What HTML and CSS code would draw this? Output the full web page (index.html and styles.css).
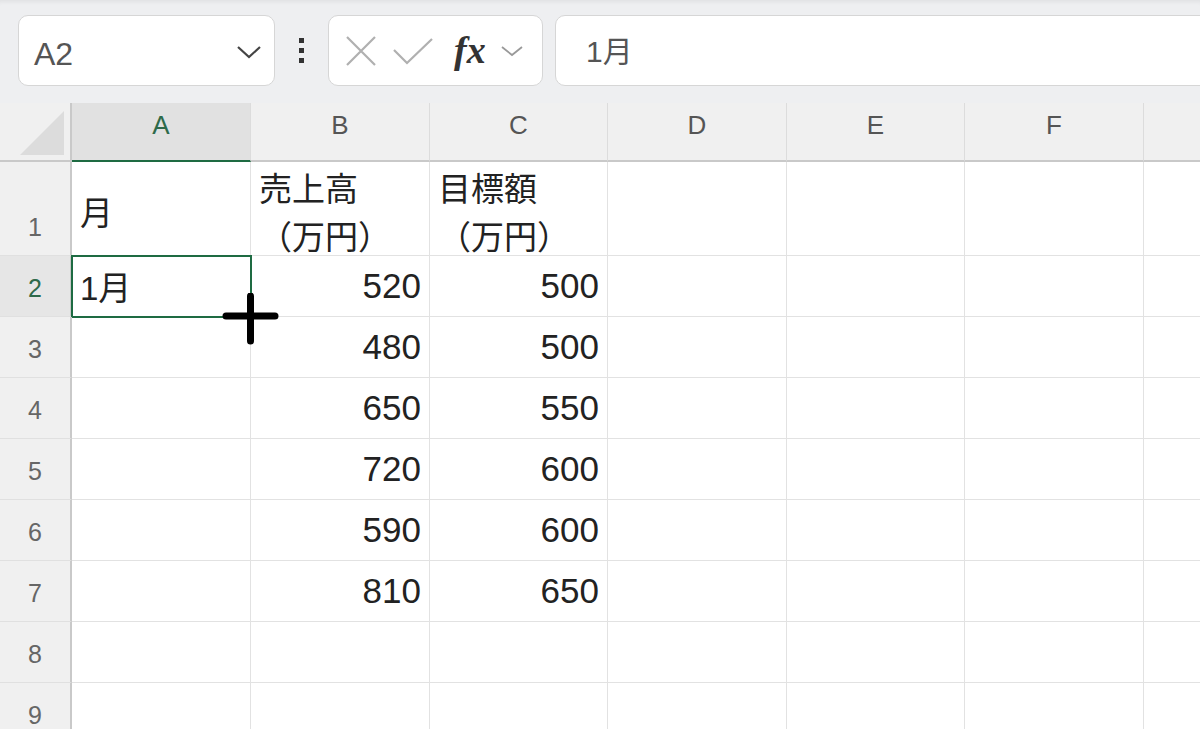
FILE: index.html
```html
<!DOCTYPE html>
<html lang="ja">
<head>
  <meta charset="UTF-8" />
  <title>Book1 - Excel</title>
  <link rel="stylesheet" href="styles.css">
</head>
<body>
  <div class="toolbar">
    <div class="namebox">
      <span>A2</span>
      <svg class="chev" width="26" height="14" viewBox="0 0 26 14"><path d="M2 2 L13 12 L24 2" fill="none" stroke="#444" stroke-width="2.2"/></svg>
    </div>
    <div class="dots"><i></i><i></i><i></i></div>
    <div class="fxbox">
      <svg width="34" height="32" viewBox="0 0 34 32"><path d="M3 2 L31 30 M31 2 L3 30" stroke="#b0b0b0" stroke-width="2.2" fill="none"/></svg>
      <svg width="42" height="28" viewBox="0 0 42 28"><path d="M2 13 L15 26 L40 2" stroke="#b0b0b0" stroke-width="2.2" fill="none"/></svg>
      <span class="fx">fx</span>
      <svg width="24" height="12" viewBox="0 0 24 12"><path d="M2 2 L12 10 L22 2" fill="none" stroke="#999" stroke-width="1.8"/></svg>
    </div>
    <div class="formula">1月</div>
  </div>

  <div class="sheet">
    <div class="grid">
      <!-- header row -->
      <div class="corner"><span class="tri"></span></div>
      <div class="colhdr sel">A</div>
      <div class="colhdr">B</div>
      <div class="colhdr">C</div>
      <div class="colhdr">D</div>
      <div class="colhdr">E</div>
      <div class="colhdr">F</div>
      <div class="colhdr"></div>

      <div class="rowhdr">1</div>
      <div class="cell jp">月</div>
      <div class="cell jp">売上高<br>（万円）</div>
      <div class="cell jp">目標額<br>（万円）</div>
      <div class="cell"></div><div class="cell"></div><div class="cell"></div><div class="cell"></div>

      <div class="rowhdr sel">2</div>
      <div class="cell active">1月</div>
      <div class="cell num">520</div>
      <div class="cell num">500</div>
      <div class="cell"></div><div class="cell"></div><div class="cell"></div><div class="cell"></div>

      <div class="rowhdr">3</div>
      <div class="cell"></div>
      <div class="cell num">480</div>
      <div class="cell num">500</div>
      <div class="cell"></div><div class="cell"></div><div class="cell"></div><div class="cell"></div>

      <div class="rowhdr">4</div>
      <div class="cell"></div>
      <div class="cell num">650</div>
      <div class="cell num">550</div>
      <div class="cell"></div><div class="cell"></div><div class="cell"></div><div class="cell"></div>

      <div class="rowhdr">5</div>
      <div class="cell"></div>
      <div class="cell num">720</div>
      <div class="cell num">600</div>
      <div class="cell"></div><div class="cell"></div><div class="cell"></div><div class="cell"></div>

      <div class="rowhdr">6</div>
      <div class="cell"></div>
      <div class="cell num">590</div>
      <div class="cell num">600</div>
      <div class="cell"></div><div class="cell"></div><div class="cell"></div><div class="cell"></div>

      <div class="rowhdr">7</div>
      <div class="cell"></div>
      <div class="cell num">810</div>
      <div class="cell num">650</div>
      <div class="cell"></div><div class="cell"></div><div class="cell"></div><div class="cell"></div>

      <div class="rowhdr">8</div>
      <div class="cell"></div><div class="cell"></div><div class="cell"></div>
      <div class="cell"></div><div class="cell"></div><div class="cell"></div><div class="cell"></div>

      <div class="rowhdr">9</div>
      <div class="cell"></div><div class="cell"></div><div class="cell"></div>
      <div class="cell"></div><div class="cell"></div><div class="cell"></div><div class="cell"></div>
    </div>

    <!-- fill cursor -->
    <svg class="cursor" width="58" height="52" viewBox="0 0 58 52">
      <path d="M4 23 L53 23 M28.5 3 L28.5 48" stroke="#000" stroke-width="7" stroke-linecap="round" fill="none"/>
    </svg>
  </div>
</body>
</html>
```

FILE: styles.css
```css
body {
  margin: 0;
  width: 1200px;
  height: 729px;
  overflow: hidden;
  background: #eeeff1;
  font-family: 'Liberation Sans', 'Noto Sans CJK JP', sans-serif;
  color: #222;
}

/* formula bar row */
.toolbar {
  display: flex;
  align-items: flex-start;
  height: 103px;
  box-sizing: border-box;
  padding: 15px 0 0 18px;
  box-shadow: inset 0 5px 4px -3px rgba(0,0,0,0.06);
}
.namebox,
.fxbox,
.formula {
  height: 71px;
  box-sizing: border-box;
  background: #fff;
  border: 1px solid #d6d6d6;
  border-radius: 10px;
  display: flex;
  align-items: center;
}
.namebox {
  width: 257px;
  padding: 0 12px 0 15px;
  justify-content: space-between;
  font-size: 32px;
  color: #555;
}
.namebox span {
  padding-top: 8px;
}
.namebox .chev {
  margin-top: 2px;
}
.dots {
  width: 53px;
  height: 71px;
  display: flex;
  flex-direction: column;
  align-items: center;
  justify-content: center;
  gap: 5px;
}
.dots i {
  width: 5px;
  height: 5px;
  background: #333;
}
.fxbox {
  width: 215px;
  padding: 0 8px 0 15px;
  gap: 14px;
}
.fx {
  font-family: 'Liberation Serif', serif;
  font-style: italic;
  font-weight: bold;
  font-size: 38px;
  color: #333;
  margin: -2px 0 0 6px;
}
.formula {
  flex: 1;
  margin-left: 12px;
  margin-right: -20px;
  padding-left: 30px;
  font-size: 30px;
  color: #555;
  padding-bottom: 4px;
}

/* sheet */
.sheet {
  position: relative;
  background: #fff;
  overflow: hidden;
  height: 626px;
}
.grid {
  display: grid;
  grid-template-columns: 72px 179px 179px 178px 179px 178px 179px 179px;
  grid-template-rows: 59px 94px repeat(8, 61px);
}
.corner {
  background: #f0f0f0;
  border-right: 2px solid #c9c9c9;
  border-bottom: 2px solid #c9c9c9;
  position: relative;
}
.tri {
  position: absolute;
  right: 6px;
  bottom: 5px;
  width: 0;
  height: 0;
  border-left: 44px solid transparent;
  border-bottom: 44px solid #dcdcdc;
}
.colhdr {
  background: #f0f0f0;
  border-right: 1px solid #dcdcdc;
  border-bottom: 2px solid #c9c9c9;
  display: flex;
  align-items: center;
  justify-content: center;
  font-size: 26px;
  color: #555;
  padding-bottom: 12px;
}
.colhdr.sel {
  background: #e1e1e1;
  border-bottom-color: #1e6b42;
  color: #2e6a4a;
}
.rowhdr {
  background: #f0f0f0;
  border-right: 2px solid #c9c9c9;
  border-bottom: 1px solid #e0e0e0;
  display: flex;
  align-items: flex-end;
  justify-content: center;
  font-size: 25px;
  line-height: 28px;
  color: #666;
  padding-bottom: 14px;
}
.rowhdr.sel {
  background: #e6e6e6;
  color: #2e6a4a;
}
.cell {
  border-right: 1px solid #e2e2e2;
  border-bottom: 1px solid #e2e2e2;
  display: flex;
  align-items: center;
  padding: 0 8px;
  font-size: 35px;
  color: #222;
  white-space: nowrap;
}
.cell.jp {
  font-family: 'Noto Sans CJK JP', sans-serif;
  font-size: 33px;
  line-height: 48px;
  padding-top: 4px;
}
.cell.num {
  justify-content: flex-end;
  padding-right: 8px;
}
.cell.active {
  font-size: 33px;
  outline: 2px solid #1e6b42;
  outline-offset: -1px;
}

.cursor {
  position: absolute;
  left: 222px;
  top: 190px;
}
```
